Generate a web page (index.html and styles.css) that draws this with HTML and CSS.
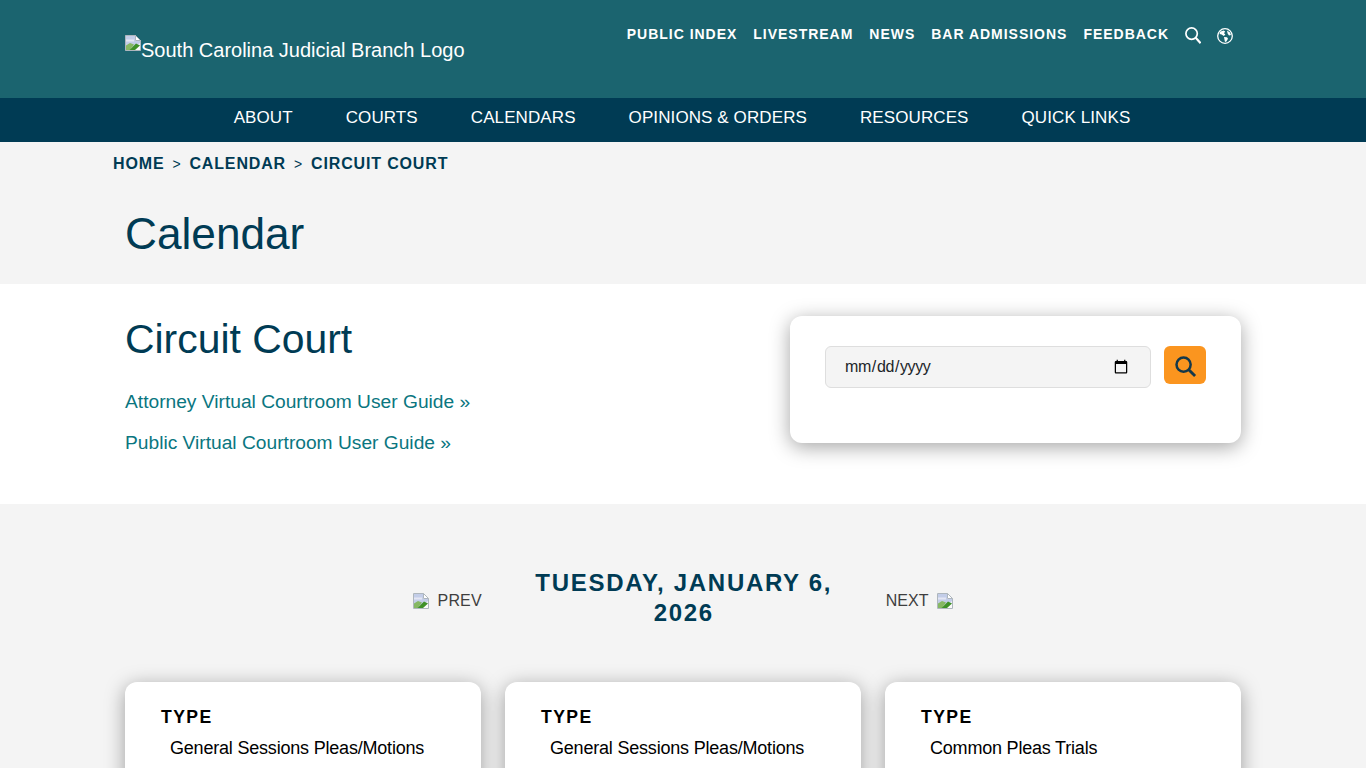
FILE: index.html
```html
<!DOCTYPE html>
<html lang="en">
<head>
<meta charset="utf-8">
<title>Calendar - Circuit Court</title>
<link rel="stylesheet" href="styles.css">
</head>
<body>
<svg class="defs" width="0" height="0" aria-hidden="true">
  <symbol id="broken" viewBox="0 0 16 16">
    <path d="M0.5 0.5H10.5L15.5 5.5V15.5H0.5Z" fill="#eef1f8" stroke="#aeb6bd"/>
    <path d="M1 1H10V6H15V8L9 12H1Z" fill="#c3cde8"/>
    <path d="M1 4.5H9V6.5H1Z" fill="#e4e6f4"/>
    <path d="M10.5 0.5V5.5H15.5Z" fill="#fff" stroke="#aeb6bd"/>
    <path d="M1 15V10.5L5 8L9 9.5L5 15Z" fill="#86b863"/>
    <path d="M4.5 15L11 8.5L15 10.5V12L12 15Z" fill="#3f9128"/>
    <path d="M10 15L15 10.5V15Z" fill="#fafafa"/>
  </symbol>
</svg>
<header class="top">
  <div class="top-inner">
    <a class="logo" href="#"><svg class="broken broken-logo"><use href="#broken"/></svg><span class="logo-text">South Carolina Judicial Branch Logo</span></a>
    <nav class="util">
      <a href="#">PUBLIC INDEX</a>
      <a href="#">LIVESTREAM</a>
      <a href="#">NEWS</a>
      <a href="#">BAR ADMISSIONS</a>
      <a href="#">FEEDBACK</a>
      <svg class="util-icon" viewBox="0 0 16 17" fill="none" stroke="#fff" stroke-width="1.7"><circle cx="6.6" cy="6.6" r="5.7"/><path d="M10.7 10.7L15.6 16.2" stroke-width="2.1"/></svg>
      <svg class="util-icon globe" viewBox="0 0 16 16"><circle cx="8" cy="8" r="7.3" fill="none" stroke="#fff" stroke-width="1.3"/><path d="M3 3.8L6.6 2.4L8.2 3.6L7 5.2L8.4 6.4L6.8 8L4.6 6.6L2.6 6ZM7 9L10 9.2L11 10.8L9.4 13.6L8 14L7.4 11.2ZM10 2.6L13 4.4L14 7L12 7.4L10.6 5.6Z" fill="#fff"/></svg>
    </nav>
  </div>
</header>
<nav class="main-nav">
  <a href="#">ABOUT</a>
  <a href="#">COURTS</a>
  <a href="#">CALENDARS</a>
  <a href="#">OPINIONS &amp; ORDERS</a>
  <a href="#">RESOURCES</a>
  <a href="#">QUICK LINKS</a>
</nav>
<section class="band-title">
  <div class="crumbs">
    <a href="#">HOME</a><span class="sep">&gt;</span><a href="#">CALENDAR</a><span class="sep">&gt;</span><a href="#">CIRCUIT COURT</a>
  </div>
  <h1>Calendar</h1>
</section>
<section class="band-intro">
  <div class="intro-inner">
    <div class="intro-text">
      <h2>Circuit Court</h2>
      <p><a href="#">Attorney Virtual Courtroom User Guide »</a></p>
      <p><a href="#">Public Virtual Courtroom User Guide »</a></p>
    </div>
    <form class="search-card">
      <input class="date" type="date">
      <button class="go" type="button" aria-label="Search">
        <svg viewBox="0 0 24 24" fill="none" stroke="#14384a" stroke-width="2.6"><circle cx="10" cy="10" r="7.4"/><path d="M15.4 15.4L22 22" stroke-width="3"/></svg>
      </button>
    </form>
  </div>
</section>
<section class="band-list">
  <div class="pager">
    <a class="pg" href="#"><svg class="broken"><use href="#broken"/></svg><span>PREV</span></a>
    <h3>TUESDAY, JANUARY 6, 2026</h3>
    <a class="pg pg-next" href="#"><span>NEXT</span><svg class="broken"><use href="#broken"/></svg></a>
  </div>
  <div class="cards">
    <article class="card"><h4>TYPE</h4><p>General Sessions Pleas/Motions</p></article>
    <article class="card"><h4>TYPE</h4><p>General Sessions Pleas/Motions</p></article>
    <article class="card"><h4>TYPE</h4><p>Common Pleas Trials</p></article>
  </div>
</section>
</body>
</html>
```
FILE: styles.css
```css
* { box-sizing: border-box; }
html, body { margin: 0; padding: 0; height: 768px; overflow: hidden; }
body { font-family: "Liberation Sans", Arial, sans-serif; background: #f4f4f4; color: #000; }
a { text-decoration: none; color: inherit; }
.defs { display: block; height: 0; }
.broken { width: 16px; height: 16px; display: block; flex: none; }

.top { height: 98px; background: #1b646f; color: #fff; }
.top-inner { width: 1116px; margin: 0 auto; display: flex; justify-content: space-between; height: 100%; }
.logo { display: flex; align-items: flex-start; padding-top: 35px; font-size: 20px; line-height: 30px; }
.util { display: flex; align-items: flex-start; gap: 16px; padding: 26px 8px 0 0; }
.util a { font-size: 14px; font-weight: 700; letter-spacing: 0.98px; line-height: 16px; }
.util-icon { width: 16px; height: 17px; display: block; margin-top: 1px; }
.globe { height: 16px; margin-top: 2px; }

.main-nav { height: 44px; background: #003b54; color: #fff; display: flex; justify-content: center; align-items: center; gap: 53px; padding: 0 2px 4px 0; }
.main-nav a { font-size: 17px; letter-spacing: 0.1px; line-height: 20px; }

.band-title { height: 142px; background: #f4f4f4; }
.crumbs { padding: 12px 0 0 113px; display: flex; align-items: center; gap: 8px; color: #003b54; font-size: 16px; font-weight: 700; letter-spacing: 0.85px; line-height: 20px; }
.sep { font-weight: 400; font-size: 14px; }
.band-title h1 { margin: 0; padding: 35px 0 0 125px; font-size: 44.2px; font-weight: 400; line-height: 50px; color: #003b54; }

.band-intro { height: 220px; background: #fff; }
.intro-inner { width: 1116px; margin: 0 auto; display: flex; justify-content: space-between; }
.intro-text h2 { margin: 0; padding-top: 31px; font-size: 40.9px; font-weight: 400; line-height: 48px; color: #003b54; }
.intro-text p { margin: 0; font-size: 19.2px; line-height: 28px; color: #0a7680; }
.intro-text h2 + p { margin-top: 25px; }
.intro-text p + p { margin-top: 13px; }
.search-card { width: 451px; height: 127px; margin-top: 32px; background: #fff; border-radius: 12px; box-shadow: 0 4px 20px rgba(0,0,0,.36); padding: 30px 35px; display: flex; gap: 13px; align-items: flex-start; }
.date { flex: 1; min-width: 0; height: 42px; background: #f4f4f4; border: 1px solid #dedede; border-radius: 6px; padding: 0 19px 0 18px; font: 16px "Liberation Sans", Arial, sans-serif; letter-spacing: -0.4px; color: #212529; }
.go { width: 42px; height: 38px; flex: none; padding: 3px 0 0; border: 0; border-radius: 6px; background: #fb951f; display: flex; align-items: center; justify-content: center; }
.go svg { width: 23px; height: 23px; display: block; }

.band-list { padding-top: 63px; }
.pager { display: flex; justify-content: center; align-items: center; }
.pg { display: flex; align-items: center; gap: 9px; padding-top: 7px; font-size: 16px; letter-spacing: 0.15px; color: #3e3e3e; line-height: 20px; }
.pg-next { letter-spacing: 0; }
.pager h3 { width: 404px; margin: 0; padding: 1px 45px 0; text-align: center; font-size: 24px; font-weight: 700; letter-spacing: 1.7px; line-height: 30px; color: #003b54; }
.cards { width: 1116px; margin: 54px auto 0; display: grid; grid-template-columns: repeat(3, 356px); gap: 24px; }
.card { height: 200px; background: #fff; border-radius: 12px; box-shadow: 0 4px 20px rgba(0,0,0,.36); padding: 25px 36px; }
.card h4 { margin: 0; font-size: 17.6px; font-weight: 700; letter-spacing: 1.4px; line-height: 20px; }
.card p { margin: 11px 0 0 9px; font-size: 18px; line-height: 20px; letter-spacing: -0.2px; }
```
